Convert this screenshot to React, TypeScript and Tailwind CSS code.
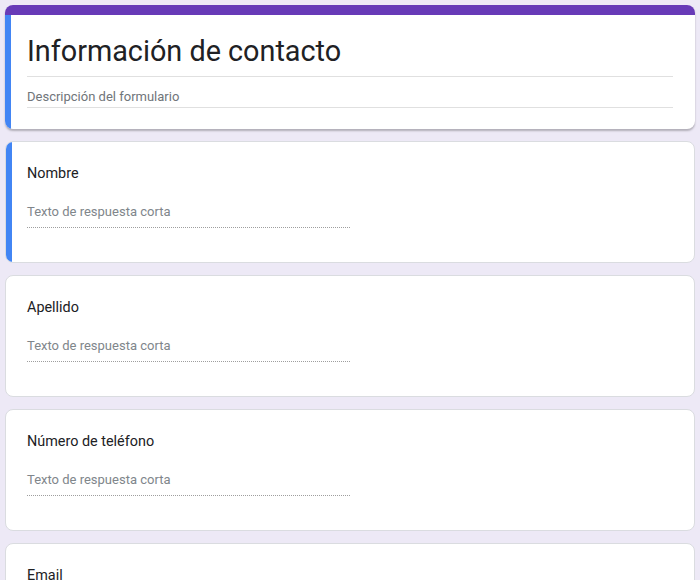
import React from 'react';

const questions = ['Nombre', 'Apellido', 'Número de teléfono', 'Email'];

const QuestionCard: React.FC<{ title: string; active?: boolean }> = ({ title, active }) => (
  <div className="relative bg-white border border-[#dadce0] rounded-lg px-[21px] pt-[20px] pb-[34px] overflow-hidden">
    {active && <div className="absolute left-0 top-0 bottom-0 w-[6px] bg-[#4285f4]"></div>}
    <div className="text-[14.4px] leading-6 text-[#202124]">{title}</div>
    <div className="mt-[16px] w-1/2 border-b border-dotted border-[#9e9e9e] pb-[5px] text-[13px] leading-5 text-[#80868b]">
      Texto de respuesta corta
    </div>
  </div>
);

export default function App() {
  return (
    <div className="min-h-screen bg-[#ede9f6] px-[5px] pt-[5px] flex flex-col gap-[12px] font-['Roboto',sans-serif]">
      {/* Header */}
      <div className="bg-white rounded-lg overflow-hidden shadow-[0_2px_2px_rgba(0,0,0,0.25)]">
        <div className="h-[10px] bg-[#673ab7]"></div>
        <div className="border-l-[6px] border-[#4285f4] pl-[16px] pr-[22px] pt-[16px] pb-[21px]">
          <h1 className="text-[28.8px] leading-10 text-[#202124] border-b border-[#e0e0e0] pb-[5px]">
            Información de contacto
          </h1>
          <p className="mt-[10px] text-[13px] leading-5 text-[#70757a] border-b border-[#e0e0e0]">
            Descripción del formulario
          </p>
        </div>
      </div>

      {questions.map((q, i) => (
        <QuestionCard key={q} title={q} active={i === 0} />
      ))}
    </div>
  );
}
